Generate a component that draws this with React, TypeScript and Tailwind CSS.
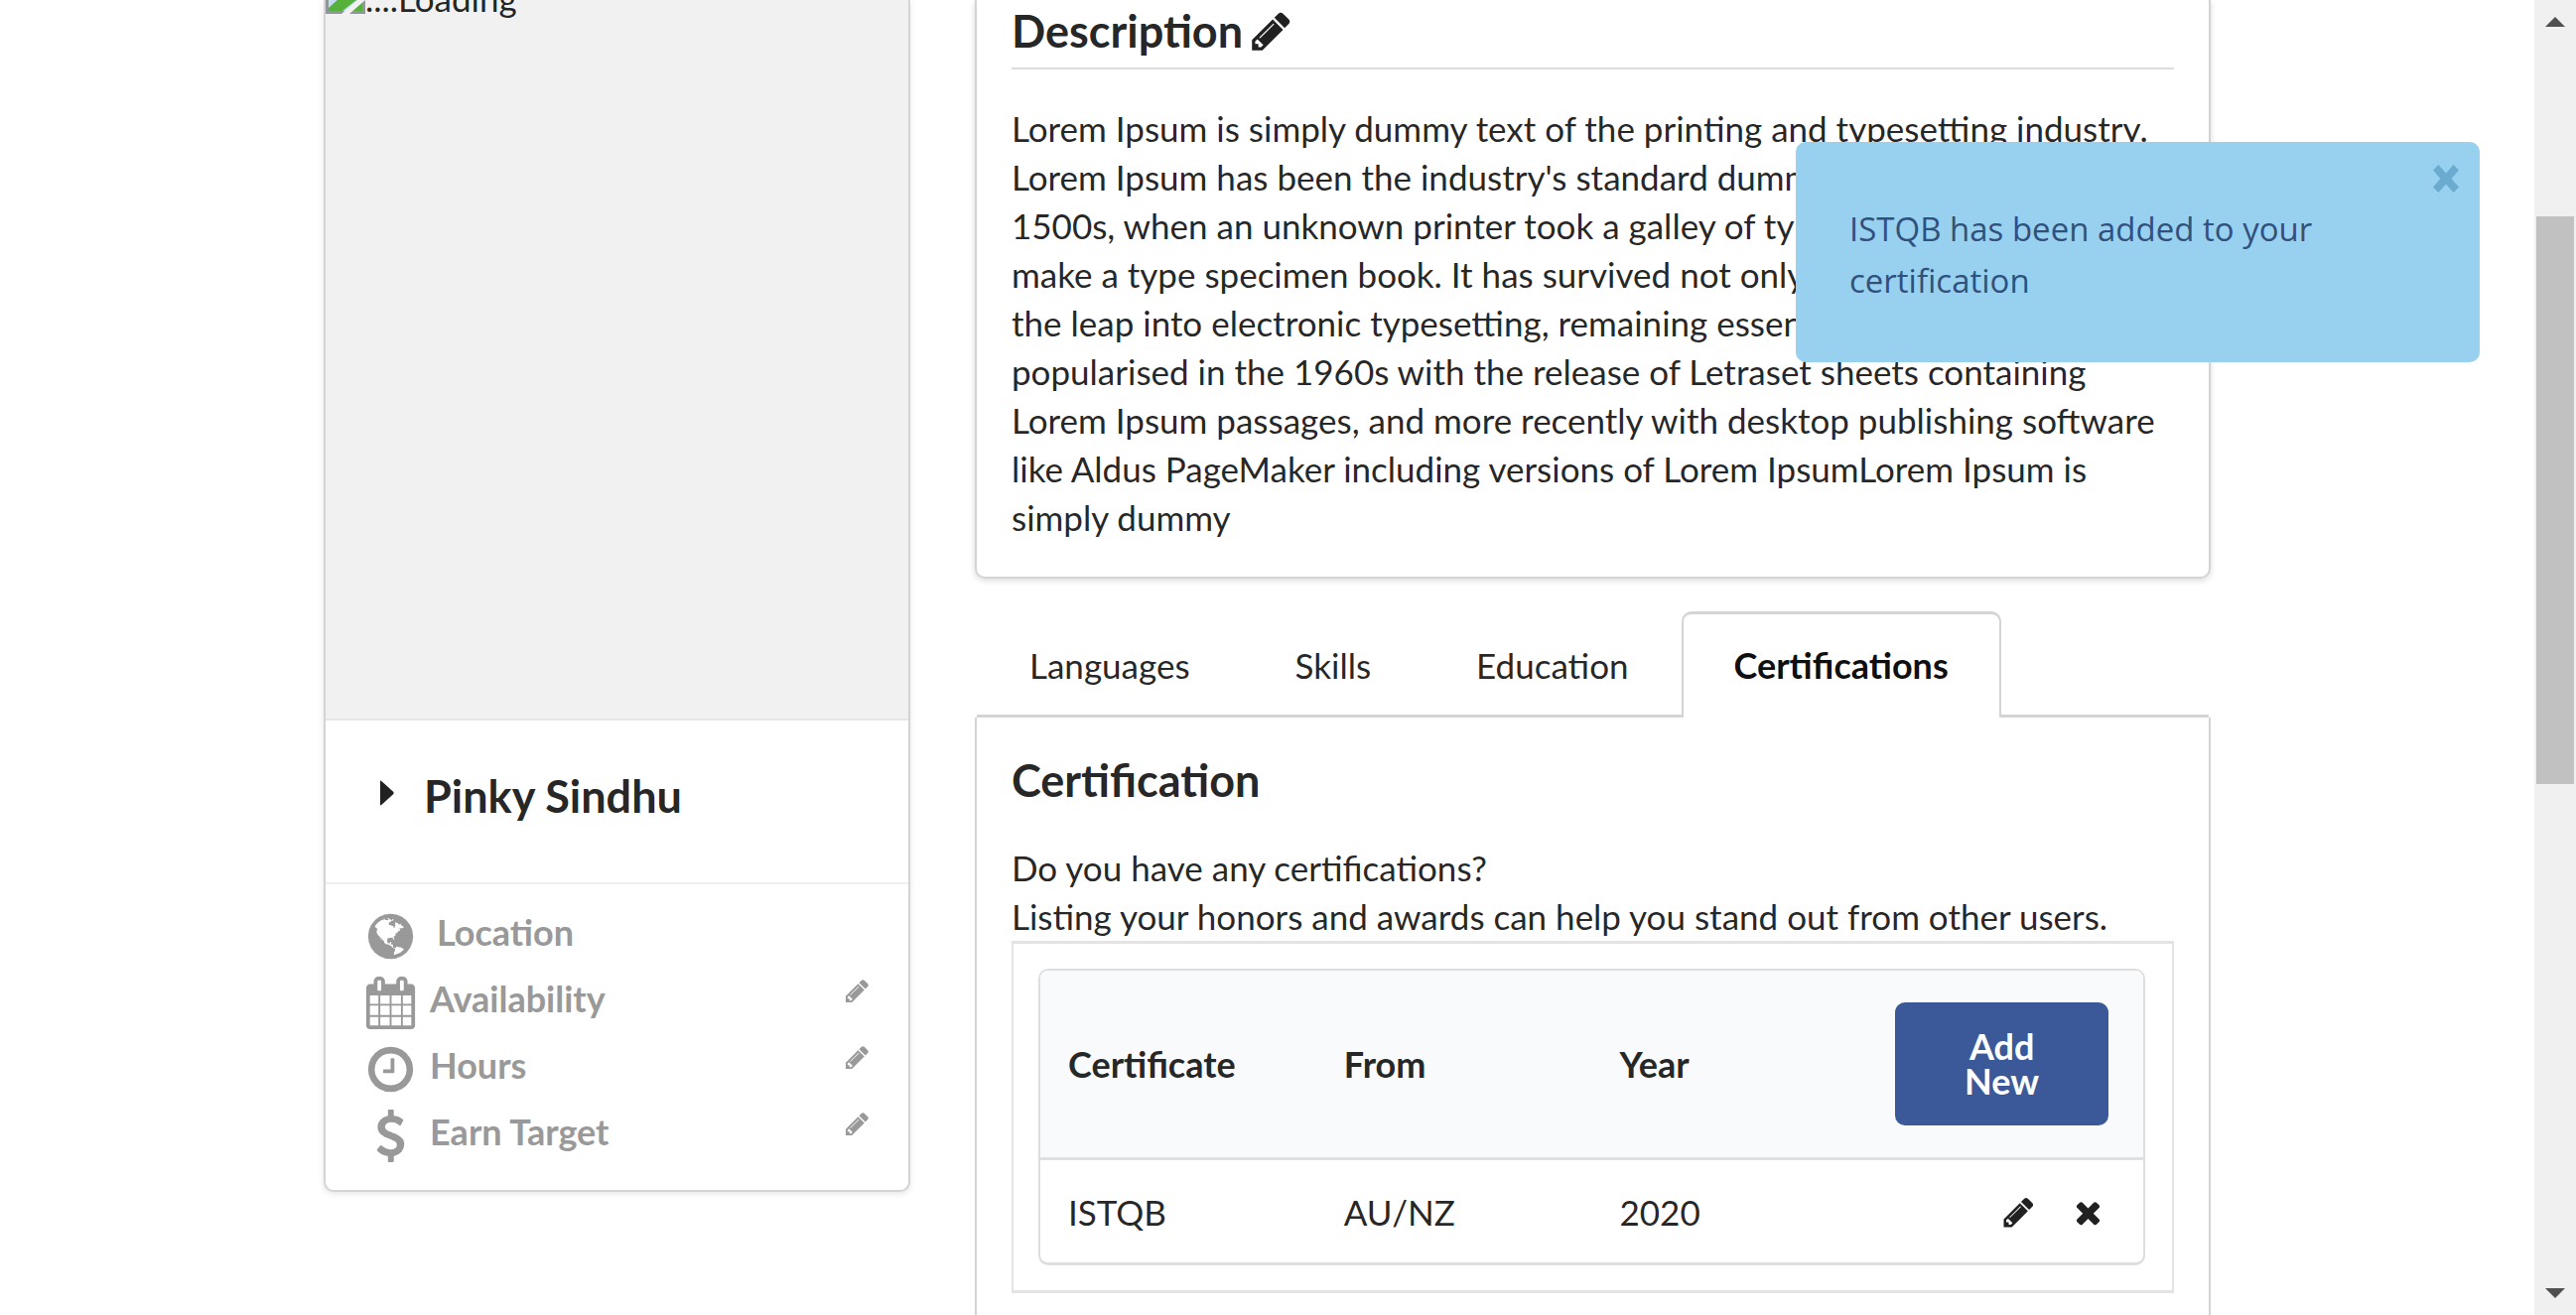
import { useState } from "react";

type IconProps = { className?: string };

const PATHS = {
  pencil:
    "M491 1536l91-91-235-235-91 91v107h128v128h107zm523-928q0-22-22-22-10 0-17 7l-542 542q-7 7-7 17 0 22 22 22 10 0 17-7l542-542q7-7 7-17zm-54-192l416 416-832 832h-416v-416zm683 96q0 53-37 90l-166 166-416-416 166-165q36-38 90-38 53 0 91 38l235 234q37 39 37 91z",
  times:
    "M1490 1322q0 40-28 68l-136 136q-28 28-68 28t-68-28l-294-294-294 294q-28 28-68 28t-68-28l-136-136q-28-28-28-68t28-68l294-294-294-294q-28-28-28-68t28-68l136-136q28-28 68-28t68 28l294 294 294-294q28-28 68-28t68 28l136 136q28 28 28 68t-28 68l-294 294 294 294q28 28 28 68z",
  clock:
    "M1024 544v448q0 14-9 23t-23 9h-320q-14 0-23-9t-9-23v-64q0-14 9-23t23-9h224v-352q0-14 9-23t23-9h64q14 0 23 9t9 23zm416 352q0-148-73-273t-198-198-273-73-273 73-198 198-73 273 73 273 198 198 273 73 273-73 198-198 73-273zm224 0q0 209-103 385.5t-279.5 279.5-385.5 103-385.5-103-279.5-279.5-103-385.5 103-385.5 279.5-279.5 385.5-103 385.5 103 279.5 279.5 103 385.5z",
  calendar:
    "M192 1664h288v-288h-288v288zm352 0h320v-288h-320v288zm-352-352h288v-320h-288v320zm352 0h320v-320h-320v320zm-352-384h288v-288h-288v288zm736 736h320v-288h-320v288zm-384-736h320v-288h-320v288zm768 736h288v-288h-288v288zm-384-352h320v-320h-320v320zm-352-864v-288q0-13-9.5-22.5t-22.5-9.5h-64q-13 0-22.5 9.5t-9.5 22.5v288q0 13 9.5 22.5t22.5 9.5h64q13 0 22.5-9.5t9.5-22.5zm736 864h288v-320h-288v320zm-384-384h320v-288h-320v288zm384 0h288v-288h-288v288zm32-480v-288q0-13-9.5-22.5t-22.5-9.5h-64q-13 0-22.5 9.5t-9.5 22.5v288q0 13 9.5 22.5t22.5 9.5h64q13 0 22.5-9.5t9.5-22.5zm384-64v1280q0 52-38 90t-90 38h-1408q-52 0-90-38t-38-90v-1280q0-52 38-90t90-38h128v-96q0-66 47-113t113-47h64q66 0 113 47t47 113v96h384v-96q0-66 47-113t113-47h64q66 0 113 47t47 113v96h128q52 0 90 38t38 90z",
  dollar:
    "M1362 1185q0 153-99.5 263.5t-258.5 136.5v175q0 14-9 23t-23 9h-135q-13 0-22.5-9.5t-9.5-22.5v-175q-66-9-127.5-31t-101.5-44.5-74-48-46.5-37.5-17.5-18q-17-21-2-41l103-135q7-10 23-12 15-2 24 9l2 2q113 99 243 125 37 8 74 8 81 0 142.5-43t61.5-122q0-28-15-53t-33.5-42-58.5-37.5-66-32-80-32.5q-39-16-61.5-25t-61.5-26.5-62.5-31-56.5-35.5-53.5-42.5-43.5-49-35.5-58-21-66.5-8.5-78q0-138 98-242t255-134v-180q0-13 9.5-22.5t22.5-9.5h135q14 0 23 9t9 23v176q57 6 110.5 23t87 33.5 63.5 37.5 39 29 15 14q17 18 5 38l-81 146q-8 15-23 16-14 3-27-7-3-3-14.5-12t-39-26.5-58.5-32-74.5-26-85.5-11.5q-95 0-155 43t-60 111q0 26 8.5 48t29.5 41.5 39.5 33 56 31 60.5 27 70 27.5q53 20 81 31.5t76 35 75.5 42.5 62 50 53 63.5 31.5 76.5 13 94z",
  globe:
    "M896 128q209 0 385.5 103t279.5 279.5 103 385.5-103 385.5-279.5 279.5-385.5 103-385.5-103-279.5-279.5-103-385.5 103-385.5 279.5-279.5 385.5-103zm274 521q-2 1-9.5 9.5t-13.5 9.5q2 0 4.5-5t5-11 3.5-7q6-7 22-15 14-6 52-12 34-8 51 11-2-2 9.5-13t14.5-12q3-2 15-4.5t15-7.5l2-22q-12 1-17.5-7t-6.5-21q0 2-6 8 0-7-4.5-8t-11.5 1-9 1q-10-3-15-7.5t-8-16.5-4-15q-2-5-9.5-11t-9.5-10q-1-2-2.5-5.5t-3-6.5-4-5.5-5.5-2.5-7 5-7.5 10-4.5 5q-3-2-6-1.5t-4.5 1-4.5 3-5 3.5q-3 2-8.5 3t-8.5 2q15-5-1-11-10-4-16-3 9-4 7.5-12t-8.5-14h5q-1-4-8.5-8.5t-17.5-8.5-13-6q-8-5-34-9.5t-33-.5q-5 6-4.5 10.5t4 14 3.5 12.5q1 6-5.5 13t-6.5 12q0 7 14 15.5t10 21.5q-3 8-16 16t-16 12q-5 8-1.5 18.5t10.5 16.5q2 2 1.5 4t-3.5 4.5-5.5 4-6.5 3.5l-3 2q-11 5-20.5-6t-13.5-26q-7-25-16-30-23-8-29 1-5-13-41-26-25-9-58-4 6-1 0-15-7-15-19-12 3-6 4-17.5t1-13.5q3-13 12-23 1-1 7-8.5t9.5-13.5.5-6q35 4 50-11 5-5 11.5-17t10.5-17q9-6 14-5.5t14.5 5.5 14.5 5q14 1 15.5-11t-7.5-20q12 1 3-17-4-7-8-9-12-4-27 5-8 4 2 8-1-1-9.5 10.5t-16.5 17.5-16-5q-1-1-5.5-13.5t-9.5-13.5q-8 0-16 15 3-8-11-15t-24-8q19-12-8-27-7-4-20.5-5t-19.5 4q-5 7-5.5 11.5t5 8 10.5 5.5 11.5 4 8.5 3q14 10 8 14-2 1-8.5 3.5t-11.5 4.5-6 4q-3 4 0 14t-2 14q-5-5-9-17.5t-7-16.5q7 9-25 6l-10-1q-4 0-16 2t-20.5 1-13.5-8q-4-8 0-20 1-4 4-2-4-3-11-9.5t-10-8.5q-46 15-94 41 6 1 12-1 5-2 13-6.5t10-5.5q34-14 42-7l5-5q14 16 20 25-7-4-30-1-20 6-22 12 7 12 5 18-4-3-11.5-10t-14.5-11-15-5q-16 0-22 1-146 80-235 222 7 7 12 8 4 1 5 9t2.5 11 11.5-3q9 8 3 19 1-1 44 27 19 17 21 21 3 11-10 18-1-2-9-9t-9-4q-3 5 .5 18.5t10.5 12.5q-7 0-9.5 16t-2.5 35.5-1 23.5l2 1q-3 12 5.5 34.5t21.5 19.5q-13 3 20 43 6 8 8 9 3 2 12 7.5t15 10 10 10.5q4 5 10 22.5t14 23.5q-2 6 9.5 20t10.5 23q-1 0-2.5 1t-2.5 1q3 7 15.5 14t15.5 13q1 3 2 10t3 11 8 2q2-20-24-62-15-25-17-29-3-5-5.5-15.5t-4.5-14.5q2 0 6 1.5t8.5 3.5 7.5 4 2 3q-3 7 2 17.5t12 18.5 17 19 12 13q6 6 14 19.5t0 13.5q9 0 20 10.5t17 19.5q5 8 8 26t5 24q2 7 8.5 13.5t12.5 9.5l16 8 13 7q5 2 18.5 10.5t21.5 11.5q10 4 16 4t14.5-2.5 13.5-3.5q15-2 29 15t21 21q36 19 55 11-2 1 .5 7.5t8 15.5 9 14.5 5.5 8.5q5 6 18 15t18 15q6-4 7-9-3 8 7 20t18 10q14-3 14-32-31 15-49-18 0-1-2.5-5.5t-4-8.5-2.5-8.5 0-7.5 5-3q9 0 10-3.5t-2-12.5-4-13q-1-8-11-20t-12-15q-5 9-16 8t-16-9q0 1-1.5 5.5t-1.5 6.5q-13 0-15-1 1-3 2.5-17.5t3.5-22.5q1-4 5.5-12t7.5-14.5 4-12.5-4.5-9.5-17.5-2.5q-19 1-26 20-1 3-3 10.5t-5 11.5-9 7q-7 3-24 2t-24-5q-13-8-22.5-29t-9.5-37q0-10 2.5-26.5t3-25-5.5-24.5q3-2 9-9.5t10-10.5q2-1 4.5-1.5t4.5 0 4-1.5 3-6q-1-1-4-3-3-3-4-3 7 3 28.5-1.5t27.5 1.5q15 11 22-2 0-1-2.5-9.5t-.5-13.5q5 27 29 9 3 3 15.5 5t17.5 5q3 2 7 5.5t5.5 4.5 5-.5 8.5-6.5q10 14 12 24 11 40 19 44 7 3 11 2t4.5-9.5 0-14-1.5-12.5l-1-8v-18l-1-8q-15-3-18.5-12t1.5-18.5 15-18.5q1-1 8-3.5t15.5-6.5 12.5-8q21-19 15-35 7 0 11-9-1 0-5-3t-7.5-5-4.5-2q9-5 2-16 5-3 7.5-11t7.5-10q9 12 21 2 7-8 1-16 5-7 20.5-10.5t18.5-9.5q7 2 8-2t1-12 3-12q4-5 15-9t13-5l17-11q3-4 0-4 18 2 31-11 10-11-6-20 3-6-3-9.5t-15-5.5q3-1 11.5-.5t10.5-1.5q15-10-7-16-17-5-43 12zm-163 877q206-36 351-189-3-3-12.5-4.5t-12.5-3.5q-18-7-24-8 1-7-2.5-13t-8-9-12.5-8-11-7q-2-2-7-6t-7-5.5-7.5-4.5-8.5-2-10 1l-3 1q-3 1-5.5 2.5t-5.5 3-4 3 0 2.5q-21-17-36-22-5-1-11-5.5t-10.5-7-10-1.5-11.5 7q-5 5-6 15t-2 13q-7-5 0-17.5t2-18.5q-3-6-10.5-4.5t-12 4.5-11.5 8.5-9 6.5-8.5 5.5-8.5 7.5q-3 4-6 12t-5 11q-2-4-11.5-6.5t-9.5-5.5q2 10 4 35t5 38q7 31-12 48-27 25-29 40-4 22 12 26 0 7-8 20.5t-7 21.5q0 6 2 16z",
};

type IconName = keyof typeof PATHS;

function Icon({ name, className }: IconProps & { name: IconName }) {
  return (
    <svg viewBox="0 0 1792 1792" fill="currentColor" aria-hidden="true" className={className}>
      <path d={PATHS[name]} />
    </svg>
  );
}

function BrokenImage() {
  return (
    <svg viewBox="0 0 40 40" aria-hidden="true" className="size-10 shrink-0">
      <path d="M0 0h28l12 12v28H0z" fill="#8f979b" />
      <path d="M3 3h24l10 10v24H3z" fill="#c5d9f2" />
      <path d="M3 37v-3l11-10 9-2 8 4-14 11z" fill="#56b13a" />
      <path d="M26 37l11-10v10z" fill="#56b13a" />
      <path d="M16 40l21-18 3-1v5L24 40z" fill="#f1f1f1" />
    </svg>
  );
}

function ProfileRow({ icon, label, indent, editable }: { icon: IconName; label: string; indent?: boolean; editable?: boolean }) {
  return (
    <li className="flex h-[67px] items-center">
      <span className="pt-2">
        <Icon name={icon} className="size-[53px]" />
      </span>
      <span className={indent ? "ml-5 font-bold" : "ml-[13px] font-bold"}>{label}</span>
      {editable && (
        <button type="button" aria-label={`Edit ${label}`} className="mb-4 ml-auto">
          <Icon name="pencil" className="size-[27px]" />
        </button>
      )}
    </li>
  );
}

function ProfileCard() {
  return (
    <aside className="self-start overflow-hidden rounded-b-[10px] border-2 border-t-0 border-[#d4d4d5] bg-white shadow-[0_2px_6px_rgba(0,0,0,0.1)]">
      <div className="flow-root h-[726px] border-b-2 border-[#e6e6e6] bg-[#f1f1f1]">
        <div className="-mt-[26px] flex items-start">
          <BrokenImage />
          <span>....Loading</span>
        </div>
      </div>
      <button type="button" className="flex w-full items-center border-b-2 border-[#efefef] pt-[47px] pb-[58px] pl-[55px] text-left">
        <svg viewBox="0 0 14 26" fill="currentColor" aria-hidden="true" className="mb-[6px] h-[26px] w-[14px]">
          <path d="M0 1.5Q0 0 1.3 .9L13.4 12Q14 13 13.4 14L1.3 25.1Q0 26 0 24.5z" />
        </svg>
        <span className="ml-[30px] text-[45px] leading-[58px] font-bold">Pinky Sindhu</span>
      </button>
      <ul className="pt-[15px] pr-[38px] pb-[25px] pl-[39px] text-[36px] text-[#999999]">
        <ProfileRow icon="globe" label="Location" indent />
        <ProfileRow icon="calendar" label="Availability" editable />
        <ProfileRow icon="clock" label="Hours" editable />
        <ProfileRow icon="dollar" label="Earn Target" editable />
      </ul>
    </aside>
  );
}

function DescriptionCard() {
  return (
    <section className="rounded-b-[10px] border-2 border-t-0 border-[#d4d4d5] px-[35px] pt-0.5 pb-[35px] shadow-[0_2px_6px_rgba(0,0,0,0.15)]">
      <div className="flex items-center gap-[6px] border-b-2 border-[#dcdcdc] pb-2">
        <h3 className="text-[45px] leading-[58px] font-bold">Description</h3>
        <button type="button" aria-label="Edit description">
          <Icon name="pencil" className="size-[45px]" />
        </button>
      </div>
      <p className="mt-[35px]">
        Lorem Ipsum is simply dummy text of the printing and typesetting industry. Lorem Ipsum has been the
        industry's standard dummy text ever since the 1500s, when an unknown printer took a galley of type and
        scrambled it to make a type specimen book. It has survived not only five centuries, but also the leap into
        electronic typesetting, remaining essentially unchanged. It was popularised in the 1960s with the release of
        Letraset sheets containing Lorem Ipsum passages, and more recently with desktop publishing software like
        Aldus PageMaker including versions of Lorem IpsumLorem Ipsum is simply dummy
      </p>
    </section>
  );
}

const TABS = ["Languages", "Skills", "Education", "Certifications"];

function Tabs() {
  const [active, setActive] = useState("Certifications");
  return (
    <div role="tablist" className="mx-0.5 mt-[33px] flex border-b-3 border-[#d4d4d5]">
      {TABS.map((tab) => (
        <button
          key={tab}
          type="button"
          role="tab"
          aria-selected={tab === active}
          onClick={() => setActive(tab)}
          className={
            tab === active
              ? "-mb-[3px] rounded-t-[10px] border-x-2 border-t-3 border-[#d4d4d5] bg-white px-[51px] pt-[34px] pb-[35px] text-[36px] leading-[35px] font-bold text-black/95"
              : "-mb-[3px] border-x-2 border-t-3 border-transparent px-[51px] pt-[34px] pb-[35px] leading-[35px]"
          }
        >
          {tab}
        </button>
      ))}
    </div>
  );
}

function CertificationPanel() {
  return (
    <section className="grow border-x-2 border-[#d4d4d5] px-[35px] pt-[34px]">
      <h3 className="text-[45px] leading-[58px] font-bold">Certification</h3>
      <p className="mt-[35px]">
        Do you have any certifications?
        <br />
        Listing your honors and awards can help you stand out from other users.
      </p>
      <div className="border-x-2 border-y-3 border-[#e3e3e3] py-[25px] pr-[27px] pl-[25px]">
        <table className="w-full table-fixed border-separate border-spacing-0 rounded-[10px] border-2 border-b-3 border-[#dedede] text-left">
          <thead>
            <tr className="text-[36px]">
              <th className="rounded-tl-[8px] border-b-3 border-[#dfe0e1] bg-[#f9fafb] px-7 font-bold">Certificate</th>
              <th className="border-b-3 border-[#dfe0e1] bg-[#f9fafb] px-7 font-bold">From</th>
              <th className="border-b-3 border-[#dfe0e1] bg-[#f9fafb] px-7 font-bold">Year</th>
              <th className="rounded-tr-[8px] border-b-3 border-[#dfe0e1] bg-[#f9fafb] py-8 pr-[35px] pl-7">
                <button type="button" className="w-full rounded-[10px] bg-[#3b5998] px-[52px] py-[27px] leading-[35px] font-bold text-white">
                  Add New
                </button>
              </th>
            </tr>
          </thead>
          <tbody>
            <tr>
              <td className="px-7 pt-7 pb-[26px]">ISTQB</td>
              <td className="px-7 pt-7 pb-[26px]">AU/NZ</td>
              <td className="px-7 pt-7 pb-[26px]">2020</td>
              <td className="pt-0.5 pr-[38px]">
                <div className="flex justify-end gap-[35px]">
                  <button type="button" aria-label="Edit ISTQB">
                    <Icon name="pencil" className="size-[35px]" />
                  </button>
                  <button type="button" aria-label="Remove ISTQB">
                    <Icon name="times" className="size-[35px]" />
                  </button>
                </div>
              </td>
            </tr>
          </tbody>
        </table>
      </div>
    </section>
  );
}

function Toast() {
  return (
    <div
      role="status"
      className="absolute top-[143px] right-[97px] w-[689px] rounded-[10px] bg-[#98d1f0] px-[54px] pt-[62px] pb-[56px] font-['Open_Sans','Noto_Sans',sans-serif] text-[33px] leading-[52px] text-[#31507c]"
    >
      ISTQB has been added to your
      <br />
      certification
      <button type="button" aria-label="Close notification" className="absolute top-[23px] right-[21px] text-[#6aabcf]">
        <svg viewBox="0 0 26 28" fill="currentColor" aria-hidden="true" className="h-7 w-[26px]">
          <path d="M5.5 0L13 8.5 20.500 0 26 5.500 18.500 14 26 22.500 20.500 28 13 19.500 5.500 28 0 22.500 7.500 14 0 5.500z" />
        </svg>
      </button>
    </div>
  );
}

function ScrollTrack() {
  return (
    <div aria-hidden="true" className="flex w-[42px] shrink-0 flex-col items-center justify-between bg-[#f0f0f0] pt-[17px] pb-[17px]">
      <svg viewBox="0 0 20 10" className="h-[10px] w-5 shrink-0" fill="#505050">
        <path d="M10 0L20 10H0z" />
      </svg>
      <div className="flex w-full grow flex-col px-0.5">
        <div className="basis-[15%]" />
        <div className="basis-[45%] bg-[#c1c1c1]" />
      </div>
      <svg viewBox="0 0 20 10" className="h-[10px] w-5 shrink-0" fill="#505050">
        <path d="M0 0H20L10 10z" />
      </svg>
    </div>
  );
}

export default function App() {
  return (
    <div className="relative flex h-screen overflow-hidden bg-white font-['Lato',sans-serif] text-[35px] leading-[49px] text-black/87">
      <main className="grid grow grid-cols-[591fr_1245fr] gap-x-[65px] px-[326px]">
        <ProfileCard />
        <div className="flex min-w-0 flex-col">
          <DescriptionCard />
          <Tabs />
          <CertificationPanel />
        </div>
      </main>
      <ScrollTrack />
      <Toast />
    </div>
  );
}
